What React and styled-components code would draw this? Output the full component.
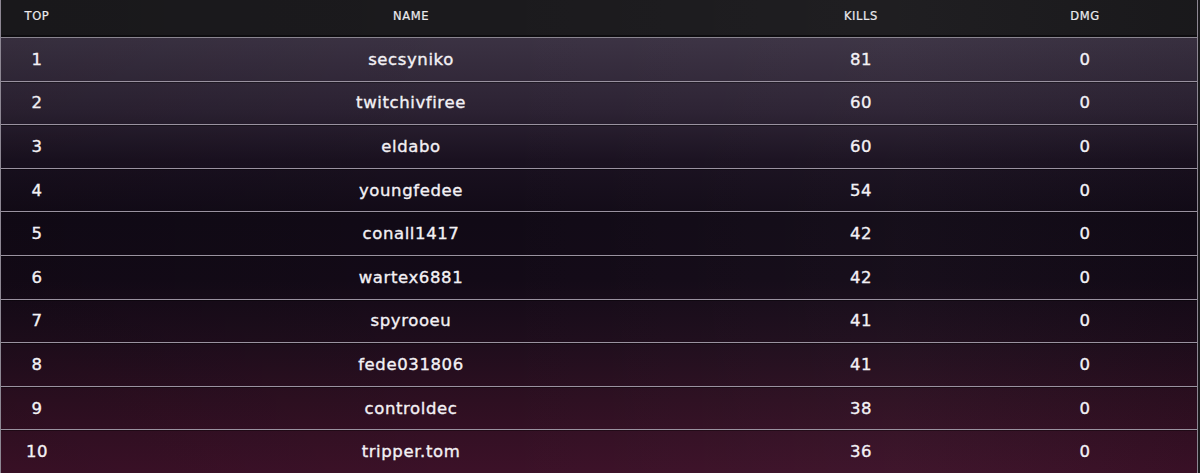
import React from 'react';
import styled, { createGlobalStyle } from 'styled-components';

const GlobalStyle = createGlobalStyle`
  html, body {
    margin: 0;
    padding: 0;
    background: #1b1a1d;
  }
  body {
    font-family: 'DejaVu Sans', 'Noto Sans', sans-serif;
    color: #f2f0f4;
    overflow: hidden;
  }
`;

const Board = styled.div`
  width: 1200px;
  height: 473px;
  box-sizing: border-box;
  border-left: 1px solid #8d8793;
  border-right: 2px solid #1b1a1d;
  background:
    linear-gradient(90deg, rgba(0, 0, 0, 0.08) 0%, rgba(0, 0, 0, 0) 40%, rgba(255, 255, 255, 0.02) 75%, rgba(0, 0, 0, 0.06) 100%),
    linear-gradient(180deg, #1b1a1d 0px, #1b1a1d 37px, #3b3243 38px, #2c2233 110px, #1a1120 160px, #110a16 220px, #130a17 280px, #1e0d1c 340px, #2d0f21 400px, #3c1128 473px);
  overflow: hidden;
`;

const Inner = styled.div`
  border-right: 1px solid #8d8793;
`;

const Row = styled.div`
  display: grid;
  grid-template-columns: 72px 676px 224px 1fr;
  align-items: center;
  box-sizing: border-box;
  height: ${p => (p.$head ? '38px' : '43.6px')};
  border-bottom: 1px solid ${p => (p.$head ? '#8a8590' : '#9a92a0')};
  box-shadow: ${p => (p.$head ? 'inset 0 -2px 0 #0e0d10' : '0 1px 0 rgba(0,0,0,0.35)')};
  padding-bottom: ${p => (p.$head ? '6px' : '0')};
`;

const HeadCell = styled.div`
  text-align: center;
  font-size: 11.5px;
  letter-spacing: 0.6px;
  text-transform: uppercase;
  color: #ecebee;
  -webkit-text-stroke: 0.2px #ecebee;
`;

const Cell = styled.div`
  text-align: center;
  font-size: 16.5px;
  letter-spacing: 0.6px;
  color: #f3f1f5;
  -webkit-text-stroke: 0.35px #f3f1f5;
`;

const columns = ['Top', 'Name', 'Kills', 'Dmg'];

const players = [
  { name: 'secsyniko', kills: 81, dmg: 0 },
  { name: 'twitchivfiree', kills: 60, dmg: 0 },
  { name: 'eldabo', kills: 60, dmg: 0 },
  { name: 'youngfedee', kills: 54, dmg: 0 },
  { name: 'conall1417', kills: 42, dmg: 0 },
  { name: 'wartex6881', kills: 42, dmg: 0 },
  { name: 'spyrooeu', kills: 41, dmg: 0 },
  { name: 'fede031806', kills: 41, dmg: 0 },
  { name: 'controldec', kills: 38, dmg: 0 },
  { name: 'tripper.tom', kills: 36, dmg: 0 },
];

export default function App() {
  return (
    <>
      <GlobalStyle />
      <Board>
        <Inner>
          <Row $head>
            {columns.map(c => (
              <HeadCell key={c}>{c}</HeadCell>
            ))}
          </Row>
          {players.map((p, i) => (
            <Row key={p.name}>
              <Cell>{i + 1}</Cell>
              <Cell>{p.name}</Cell>
              <Cell>{p.kills}</Cell>
              <Cell>{p.dmg}</Cell>
            </Row>
          ))}
        </Inner>
      </Board>
    </>
  );
}
